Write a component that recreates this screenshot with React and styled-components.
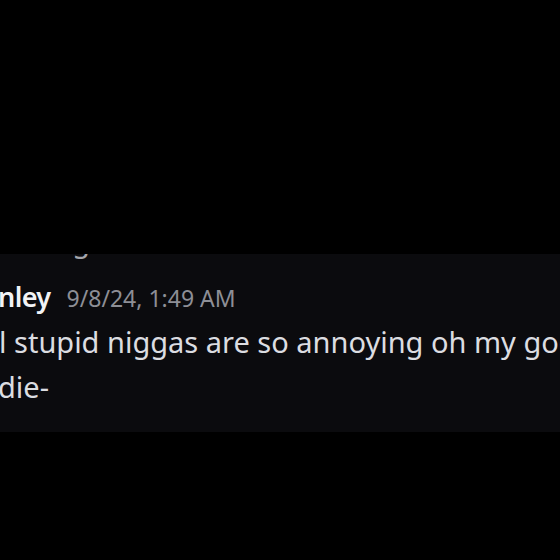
import React from "react";
import styled, { createGlobalStyle } from "styled-components";

const GlobalStyle = createGlobalStyle`
  html, body {
    margin: 0;
    padding: 0;
    background: #000;
  }
  body {
    font-family: "Noto Sans", "Open Sans", sans-serif;
  }
`;

const Page = styled.div`
  width: 560px;
  height: 560px;
  overflow: hidden;
  display: flex;
  flex-direction: column;
  background: #000;
`;

const Letterbox = styled.div`
  height: ${(p) => p.h}px;
  flex-shrink: 0;
  background: #000;
`;

const ChatPanel = styled.div`
  height: 178px;
  flex-shrink: 0;
  background: #0b0b0e;
  overflow: hidden;
  display: flex;
  flex-direction: column;
`;

const Line = styled.div`
  font-size: 29px;
  line-height: 45px;
  height: 45px;
  flex-shrink: 0;
  white-space: nowrap;
  color: #dcdde1;
  margin-left: ${(p) => p.indent || 0}px;
`;

// bottom edge of the previous message, mostly hidden above the panel
const CutLine = styled(Line)`
  margin-top: -36px;
  color: #a4a5ab;
`;

const Header = styled.div`
  display: flex;
  align-items: baseline;
  flex-shrink: 0;
  margin-top: 11px;
  height: 45px;
  line-height: 45px;
  white-space: nowrap;
  margin-left: -2px;
`;

const Username = styled.span`
  font-size: 27px;
  font-weight: 600;
  color: #f2f3f5;
  letter-spacing: -0.6px;
`;

const Timestamp = styled.span`
  font-size: 23px;
  color: #8e8f96;
  margin-left: 16px;
`;

export default function App() {
  return (
    <>
      <GlobalStyle />
      <Page>
        <Letterbox h={254} />
        <ChatPanel>
          <CutLine indent={22}>I'm gonna be honest tho</CutLine>
          <Header>
            <Username>nley</Username>
            <Timestamp>9/8/24, 1:49 AM</Timestamp>
          </Header>
          <Line indent={-1}>l stupid niggas are so annoying oh my god</Line>
          <Line indent={-2}>die-</Line>
        </ChatPanel>
      </Page>
    </>
  );
}
